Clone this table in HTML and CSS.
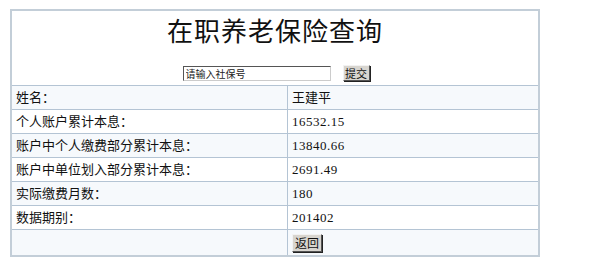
FILE: index.html
```html
<!DOCTYPE html>
<html lang="zh">
<head>
<meta charset="utf-8">
<title>在职养老保险查询</title>
<link rel="stylesheet" href="styles.css">
</head>
<body>
<div class="page">
  <table class="query">
    <tr class="head">
      <td colspan="2">
        <div class="title">在职养老保险查询</div>
        <form class="search">
          <input class="ssn" type="text" value="请输入社保号">
          <button class="btn submit" type="button">提交</button>
        </form>
      </td>
    </tr>
    <tr class="odd"><td class="label">姓名：</td><td class="value">王建平</td></tr>
    <tr><td class="label">个人账户累计本息：</td><td class="value num">16532.15</td></tr>
    <tr class="odd"><td class="label">账户中个人缴费部分累计本息：</td><td class="value num">13840.66</td></tr>
    <tr><td class="label">账户中单位划入部分累计本息：</td><td class="value num">2691.49</td></tr>
    <tr class="odd"><td class="label">实际缴费月数：</td><td class="value num">180</td></tr>
    <tr><td class="label">数据期别：</td><td class="value num">201402</td></tr>
    <tr class="odd last"><td class="label"></td><td class="value"><button class="btn back" type="button">返回</button></td></tr>
  </table>
</div>
</body>
</html>
```

FILE: styles.css
```css
html, body {
  margin: 0;
  padding: 0;
  background: #ffffff;
}
.page {
  padding: 9px 0 0 10px;
}
.query {
  width: 530px;
  border-collapse: collapse;
  border: 2px solid #c3ced8;
  font-family: "Liberation Serif", "Noto Sans CJK SC", serif;
  font-size: 13px;
  color: #111;
}
.query td {
  border: 1px solid #b4c4d4;
  padding: 0 4px;
  height: 23px;
  line-height: 15px;
}
.query td.label {
  width: 267px;
}
.query td.num {
  letter-spacing: 0.5px;
}
.query tr.odd td {
  background: #f6f9fc;
}
.query tr.head td {
  background: #ffffff;
  text-align: center;
  height: 74px;
  padding: 0;
  vertical-align: top;
}
.title {
  font-family: "Noto Sans CJK SC", "Liberation Serif", serif;
  font-size: 26px;
  line-height: 30px;
  margin-top: 4px;
  color: #111;
  letter-spacing: 1px;
}
.search {
  margin: 20px 0 0 0;
  display: flex;
  justify-content: center;
  align-items: center;
  gap: 12px;
  padding-left: 2px;
}
.ssn {
  box-sizing: border-box;
  width: 148px;
  height: 15px;
  margin: 0;
  padding: 0 2px;
  border: 1px solid #555;
  border-right-color: #ccc;
  border-bottom-color: #ccc;
  font-family: "Noto Sans CJK SC", sans-serif;
  font-size: 10px;
  color: #222;
  background: #fff;
}
.btn {
  box-sizing: border-box;
  margin: 0;
  padding: 0;
  background: #d8d5cf;
  border: 1px solid;
  border-color: #f2f2f2 #555 #555 #f2f2f2;
  box-shadow: 1px 1px 0 #222;
  font-family: "Noto Sans CJK SC", sans-serif;
  font-size: 11px;
  line-height: 12px;
  color: #111;
}
.submit {
  width: 27px;
  height: 16px;
}
.back {
  width: 30px;
  height: 18px;
  margin-top: 1px;
  font-size: 12px;
}
.query tr.last td {
  height: 25px;
}
```
